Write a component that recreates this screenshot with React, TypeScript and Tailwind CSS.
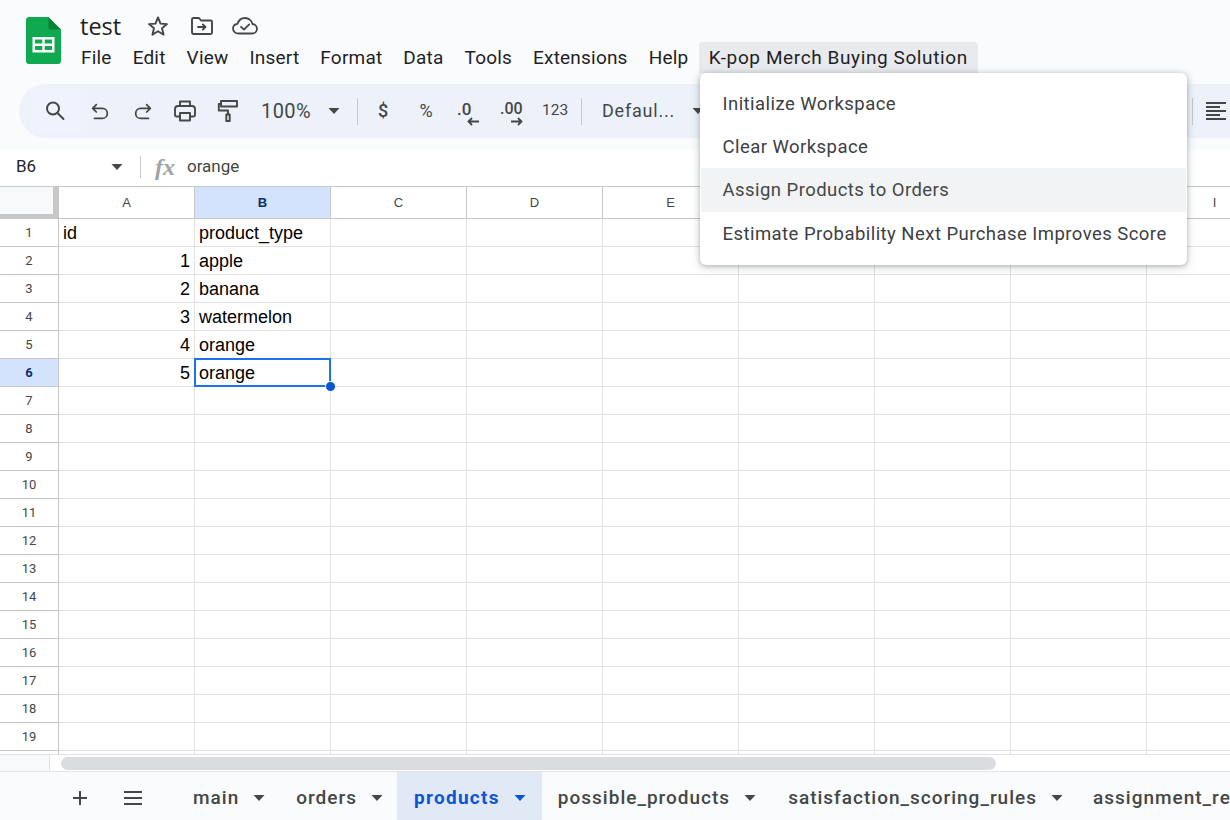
import React from "react";

const ink = "#444746";

function Caret({ className = "", color = "#444746" }: { className?: string; color?: string }) {
  return (
    <svg className={className} width="12" height="6" viewBox="0 0 12 6">
      <path d="M0.5 0 H11.5 L6 6 Z" fill={color} />
    </svg>
  );
}

function Logo() {
  return (
    <svg width="35" height="47" viewBox="0 0 35 47" className="shrink-0">
      <path d="M22.5 0 H3 C1.3 0 0 1.3 0 3 V44 C0 45.7 1.3 47 3 47 H32 C33.7 47 35 45.7 35 44 V12.5 L28 7 Z" fill="#0FA94F" />
      <path d="M22.5 0 L35 12.5 H25 C23.6 12.5 22.5 11.4 22.5 10 Z" fill="#0A7F3A" />
      <path d="M6.5 20 H28.5 V35.5 H6.5 Z M9 22.5 V26.5 H16.3 V22.5 Z M18.7 22.5 V26.5 H26 V22.5 Z M9 29 V33 H16.3 V29 Z M18.7 29 V33 H26 V29 Z" fill="#fff" fillRule="evenodd" />
    </svg>
  );
}

function Stroke({ size = 24, children, className = "" }: { size?: number; children: React.ReactNode; className?: string }) {
  return (
    <svg className={className} width={size} height={size} viewBox="0 0 24 24" fill="none" stroke={ink} strokeWidth="1.9" strokeLinecap="round" strokeLinejoin="round">
      {children}
    </svg>
  );
}

const StarIcon = () => (
  <Stroke size={24}><path d="M12 3.4 L14.5 9.6 L21 10.1 L16 14.3 L17.6 20.7 L12 17.2 L6.4 20.7 L8 14.3 L3 10.1 L9.5 9.6 Z" /></Stroke>
);
const MoveIcon = () => (
  <Stroke size={24}>
    <path d="M2 5.5 C2 4.7 2.6 4 3.4 4 H9 L11 6.5 H20.6 C21.4 6.5 22 7.2 22 8 V18.5 C22 19.3 21.4 20 20.6 20 H3.4 C2.6 20 2 19.3 2 18.5 Z" />
    <path d="M8 13 H15.5 M12.8 10.4 L15.5 13 L12.8 15.6" />
  </Stroke>
);
const CloudIcon = () => (
  <svg width="26" height="20" viewBox="0 0 26 20" fill="none" stroke={ink} strokeWidth="1.8" strokeLinecap="round" strokeLinejoin="round">
    <path d="M6.5 17.5 C3.4 17.5 1 15.4 1 12.6 C1 10 3 8.1 5.5 7.8 C6.7 4.3 9.5 2 13 2 C17 2 20 4.9 20.5 8 C23 8.2 25 10.2 25 12.8 C25 15.4 22.8 17.5 20 17.5 Z" />
    <path d="M9 10.8 L12 13.6 L17.2 8.4" />
  </svg>
);
const SearchIcon = () => (
  <Stroke size={24}><circle cx="10" cy="9.5" r="6" /><path d="M14.5 14 L20.5 20" /></Stroke>
);
const UndoIcon = () => (
  <Stroke size={22}><path d="M8 4 L4 8 L8 12 M4 8 H14.5 C17.5 8 20 10.3 20 13.5 C20 16.7 17.5 19 14.5 19 H6" /></Stroke>
);
const RedoIcon = () => (
  <Stroke size={22}><path d="M16 4 L20 8 L16 12 M20 8 H9.5 C6.5 8 4 10.3 4 13.5 C4 16.7 6.5 19 9.5 19 H18" /></Stroke>
);
const PrintIcon = () => (
  <Stroke size={24}>
    <path d="M7 7 V2.5 H17 V7" />
    <path d="M7 17.5 H3.5 C2.7 17.5 2 16.8 2 16 V10 C2 8.2 3.2 7 5 7 H19 C20.8 7 22 8.2 22 10 V16 C22 16.8 21.3 17.5 20.5 17.5 H17" />
    <path d="M7 14 H17 V21.5 H7 Z" />
  </Stroke>
);
const PaintIcon = () => (
  <Stroke size={24}>
    <path d="M5 2 H21 V7.5 H5 Z" />
    <path d="M5 5 H2.8 V11.5 H12 V15.5" />
    <path d="M10.3 15.5 H13.7 V22 H10.3 Z" />
  </Stroke>
);
const AlignIcon = () => (
  <svg width="20" height="20" viewBox="0 0 20 20" fill={ink}>
    <path d="M0 1 H20 V3 H0 Z M0 5 H14 V7 H0 Z M0 9 H20 V11 H0 Z M0 13 H14 V15 H0 Z M0 17 H20 V19 H0 Z" />
  </svg>
);
const Arrow = ({ dir }: { dir: "l" | "r" }) => (
  <svg width="12" height="9" viewBox="0 0 12 9" fill="none" stroke={ink} strokeWidth="1.8">
    {dir === "l" ? <path d="M12 4.5 H1.5 M5 1 L1.5 4.5 L5 8" /> : <path d="M0 4.5 H10.5 M7 1 L10.5 4.5 L7 8" />}
  </svg>
);
const Divider = ({ className = "" }: { className?: string }) => <div className={`w-px h-[27px] bg-[#c7c7c7] shrink-0 ${className}`} />;

const menus = ["File", "Edit", "View", "Insert", "Format", "Data", "Tools", "Extensions", "Help"];

const columns = ["A", "B", "C", "D", "E", "F", "G", "H", "I"];

const data: Record<number, [string, string]> = {
  1: ["id", "product_type"],
  2: ["1", "apple"],
  3: ["2", "banana"],
  4: ["3", "watermelon"],
  5: ["4", "orange"],
  6: ["5", "orange"],
};

const rows = Array.from({ length: 19 }, (_, i) => i + 1);

function Tab({ name, active = false, className = "" }: { name: string; active?: boolean; className?: string }) {
  return (
    <div
      className={`flex items-center shrink-0 h-full pt-[4px] ${
        active ? "bg-[#e1e9f7] text-[#0b57d0] font-bold tracking-[1.3px] pl-[17px] pr-[16px]" : "text-[#444746] font-medium tracking-[1px] px-[16px]"
      } ${className}`}
    >
      <span>{name}</span>
      <Caret className="ml-[14px]" color={active ? "#0b57d0" : "#444746"} />
    </div>
  );
}

export default function App() {
  return (
    <div className="relative w-[1230px] h-[820px] overflow-hidden bg-white flex flex-col font-['Roboto',sans-serif]">
      {/* Header */}
      <header className="h-[149px] shrink-0 bg-[#f9fbfd] flex flex-col">
        <div className="flex h-[84px] pl-[26px] pt-[17px]">
          <Logo />
          <div className="ml-[20px] flex flex-col -mt-[7px]">
            <div className="flex items-center h-[32px]">
              <span className="text-[23.5px] leading-[32px] text-[#1f1f1f] font-['Open_Sans',sans-serif] -ml-[1px]">test</span>
              <span className="ml-[25px] flex"><StarIcon /></span>
              <span className="ml-[20px] flex"><MoveIcon /></span>
              <span className="ml-[18px] flex"><CloudIcon /></span>
            </div>
            <nav className="flex items-center h-[31px] -ml-[10.5px] text-[19px] text-[#1f1f1f] tracking-[0.2px]">
              {menus.map((m) => (
                <span key={m} className="px-[10.5px] leading-[31px]">{m}</span>
              ))}
              <span className="px-[10px] leading-[31px] bg-[#e8eaed] rounded-t-[4px] whitespace-nowrap tracking-[0.6px]">K-pop Merch Buying Solution</span>
            </nav>
          </div>
        </div>
        <div className="h-[54px] flex items-center ml-[19px] -mr-[40px] pl-[12px] rounded-l-[27px] bg-[#edf2fa] text-[#444746]">
          <div className="w-[50px] h-[46px] flex items-center justify-center bg-[#eef3fd] shrink-0 pr-[2px]"><SearchIcon /></div>
          <div className="w-[38px] flex justify-center shrink-0 pt-[2px]"><UndoIcon /></div>
          <div className="ml-[5px] w-[38px] flex justify-center shrink-0 pt-[2px]"><RedoIcon /></div>
          <div className="ml-[4px] w-[38px] flex justify-center shrink-0"><PrintIcon /></div>
          <div className="ml-[5px] w-[38px] flex justify-center shrink-0"><PaintIcon /></div>
          <span className="ml-[14px] text-[20px] w-[52px] shrink-0 tracking-[0.4px]">100%</span>
          <Caret className="ml-[15px] shrink-0" />
          <Divider className="ml-[17px]" />
          <span className="ml-[19px] w-[12px] text-[18px] font-medium text-center shrink-0 pb-[2px]">$</span>
          <span className="ml-[29px] w-[16px] text-[18px] text-center shrink-0 pb-[2px]">%</span>
          <div className="ml-[23px] relative w-[22px] h-[30px] shrink-0 text-[17px] font-medium">
            <span className="absolute left-0 top-0 leading-[26px]">.0</span>
            <span className="absolute right-0 bottom-0 flex"><Arrow dir="l" /></span>
          </div>
          <div className="ml-[21px] relative w-[23px] h-[30px] shrink-0 text-[16px] font-medium">
            <span className="absolute left-0 top-0 leading-[26px] whitespace-nowrap">.00</span>
            <span className="absolute right-0 bottom-0 flex"><Arrow dir="r" /></span>
          </div>
          <span className="ml-[19px] w-[24px] text-[15.5px] shrink-0 pb-[1px]">123</span>
          <Divider className="ml-[15px]" />
          <span className="ml-[20px] text-[18px] tracking-[0.8px] shrink-0 pb-[2px]">Defaul...</span>
          <Caret className="ml-[17px] shrink-0" />
          <Divider className="ml-[488px]" />
          <div className="ml-[13px] flex shrink-0"><AlignIcon /></div>
        </div>
      </header>

      {/* Formula bar */}
      <div className="h-[38px] shrink-0 flex items-center pb-[1px] border-b border-[#c7c7c7] text-[#444746] bg-white">
        <span className="ml-[16px] w-[95px] text-[17px] text-[#1f1f1f]">B6</span>
        <Caret />
        <div className="ml-[17px] w-px h-[22px] bg-[#c7c7c7]" />
        <span className="ml-[14px] font-['Liberation_Serif',serif] italic font-bold text-[24px] text-[#a0a4a8] w-[32px] leading-none">fx</span>
        <span className="text-[17px] text-[#444746]">orange</span>
      </div>

      {/* Grid */}
      <div className="flex-1 min-h-0 overflow-hidden flex flex-col">
        <div className="flex h-[32px] shrink-0">
          <div className="w-[59px] shrink-0 bg-[#f8f9fa] border-r-[6px] border-b-[5px] border-[#c7c7c7]" />
          {columns.map((c) => (
            <div
              key={c}
              className={`w-[136px] shrink-0 flex items-center justify-center text-[13px] border-r border-b border-[#c7c7c7] font-['Liberation_Sans',sans-serif] ${
                c === "B" ? "bg-[#d3e3fd] font-bold text-[#0b2f6b]" : "bg-white text-[#444746]"
              }`}
            >
              {c}
            </div>
          ))}
        </div>
        {rows.map((r) => (
          <div key={r} className="flex h-[28px] shrink-0">
            <div
              className={`w-[59px] shrink-0 flex items-center justify-center text-[13px] border-r border-b border-[#c7c7c7] ${
                r === 6 ? "bg-[#d3e3fd] font-bold text-[#0b2f6b]" : "bg-white text-[#444746]"
              }`}
            >
              {r}
            </div>
            {columns.map((c, i) => {
              const d = data[r];
              const v = d && i < 2 ? d[i] : "";
              const numeric = i === 0 && r > 1;
              const sel = r === 6 && c === "B";
              return (
                <div
                  key={c}
                  className={`w-[136px] shrink-0 border-r border-b border-[#e1e1e1] text-[18px] leading-[28px] text-black font-['Liberation_Sans',sans-serif] px-[4px] whitespace-nowrap ${
                    numeric ? "text-right" : "text-left"
                  } ${sel ? "relative z-10" : ""}`}
                >
                  {v}
                  {sel && (
                    <>
                      <div className="absolute -left-px -top-px w-[137px] h-[29px] border-2 border-[#1a73e8]" />
                      <div className="absolute -right-[6px] -bottom-[6px] w-[11px] h-[11px] rounded-full bg-[#0b57d0] border border-white" />
                    </>
                  )}
                </div>
              );
            })}
          </div>
        ))}
        <div className="flex h-[4px] shrink-0 border-b border-[#e1e1e1]">
          <div className="w-[59px] shrink-0 border-r border-[#c7c7c7]" />
          {columns.map((c) => (
            <div key={c} className="w-[136px] shrink-0 border-r border-[#e1e1e1]" />
          ))}
        </div>
      </div>

      {/* Scrollbar */}
      <div className="h-[17px] shrink-0 flex bg-white border-b border-[#e1e3e5]">
        <div className="w-[50px] bg-[#f8f9fa] h-[16px] border-r border-[#e1e3e5]" />
        <div className="ml-[11px] mt-[2px] w-[935px] h-[13px] rounded-full bg-[#dadce0]" />
      </div>

      {/* Tabs */}
      <footer className="h-[48px] shrink-0 bg-[#f9fbfd] flex items-center text-[19px] overflow-hidden">
        <svg className="ml-[72px] mt-[4px] shrink-0" width="16" height="16" viewBox="0 0 16 16" fill="none" stroke={ink} strokeWidth="2"><path d="M8 1 V15 M1 8 H15" /></svg>
        <svg className="ml-[35px] mt-[4px] shrink-0" width="20" height="14" viewBox="0 0 20 14" fill={ink}><path d="M1 0 H19 V2 H1 Z M1 6 H19 V8 H1 Z M1 12 H19 V14 H1 Z" /></svg>
        <div className="flex h-full ml-[34px]">
          <Tab name="main" />
          <Tab name="orders" className="-ml-[1px]" />
          <Tab name="products" active className="-ml-[2px]" />
          <Tab name="possible_products" />
          <Tab name="satisfaction_scoring_rules" />
          <Tab name="assignment_results" className="-ml-[2px]" />
        </div>
      </footer>

      {/* Dropdown */}
      <div className="absolute left-[700px] top-[73px] w-[487px] h-[192px] bg-white rounded-[6px] shadow-[0_1px_4px_rgba(60,64,67,0.3),0_2px_8px_2px_rgba(60,64,67,0.15)] px-px py-[9px] text-[18.5px] text-[#3c4043] tracking-[0.45px]">
        <div className="h-[43px] flex items-center pt-[2px] pl-[21.5px]">Initialize Workspace</div>
        <div className="h-[43px] flex items-center pt-[2px] pl-[21.5px]">Clear Workspace</div>
        <div className="h-[44px] flex items-center pt-[2px] pl-[21.5px] bg-[#f1f3f4] text-[#444746]">Assign Products to Orders</div>
        <div className="h-[43px] flex items-center pt-[2px] pl-[21.5px] whitespace-nowrap">Estimate Probability Next Purchase Improves Score</div>
      </div>
    </div>
  );
}
